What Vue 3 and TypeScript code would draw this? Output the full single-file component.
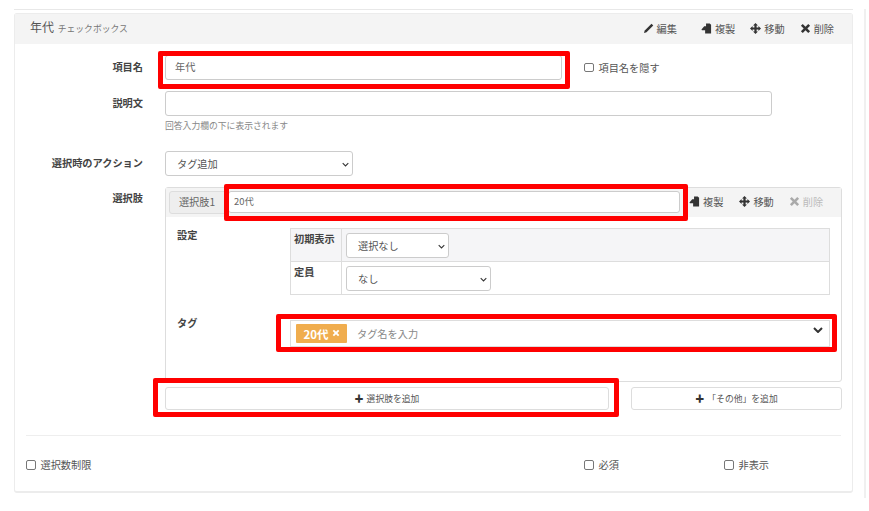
<script setup lang="ts">
const tableRows = [
  { label: '初期表示', value: '選択なし', width: 'narrow', shaded: true },
  { label: '定員', value: 'なし', width: 'wide', shaded: false },
]
const footChecks = ['必須', '非表示']
</script>

<template>
  <div class="page">
    <div class="sheet">
      <section class="card">
        <header class="card-head">
          <div class="title">年代 <small>チェックボックス</small></div>
          <div class="actions">
            <span class="act act-edit">
              <svg viewBox="0 0 12 12"><path d="M9.300.8l1.900 1.900-7.400 7.400-2.800.9.900-2.800z" /></svg>編集
            </span>
            <span class="act act-copy">
              <svg viewBox="0 0 12 12"><path d="M5.500 0.500h4l1.500 1.500v9.500H4.500V8H1L0.500 7l3-3.500h2zM3.500 5v2h-1.500z" /></svg>複製
            </span>
            <span class="act act-move">
              <svg viewBox="0 0 12 12"><path d="M6 0l2.700 2.800H7.200v2h2V3.300L12 6 9.200 8.700V7.200h-2v2h1.500L6 12 3.300 9.200h1.500v-2h-2v1.500L0 6l2.800-2.700v1.500h2v-2H3.300z" /></svg>移動
            </span>
            <span class="act">
              <svg viewBox="0 0 12 12"><path d="M3 1l3 3 3-3 2 2-3 3 3 3-2 2-3-3-3 3-2-2 3-3-3-3z" /></svg>削除
            </span>
          </div>
        </header>

        <div class="card-body">
          <div class="row row-name">
            <label class="label">項目名</label>
            <div class="mark mark-name"><input class="input name-input" value="年代" /></div>
            <label class="check check-hide"><i class="box"></i>項目名を隠す</label>
          </div>

          <div class="row row-desc">
            <label class="label">説明文</label>
            <div>
              <input class="input desc-input" />
              <p class="help">回答入力欄の下に表示されます</p>
            </div>
          </div>

          <div class="row row-action">
            <label class="label">選択時のアクション</label>
            <div class="select action-select">タグ追加<svg class="caret" viewBox="0 0 10 6"><path d="M1 1l4 4 4-4" /></svg></div>
          </div>

          <div class="row row-options">
            <label class="label">選択肢</label>
            <div class="options-col">
              <div class="panel">
                <div class="panel-head">
                  <span class="tab">選択肢1</span>
                  <div class="mark mark-option"><input class="input option-input" value="20代" /></div>
                  <div class="panel-actions">
                    <span class="act act-copy">
                      <svg viewBox="0 0 12 12"><path d="M5.500 0.500h4l1.500 1.500v9.500H4.500V8H1L0.500 7l3-3.500h2zM3.500 5v2h-1.500z" /></svg>複製
                    </span>
                    <span class="act act-move">
                      <svg viewBox="0 0 12 12"><path d="M6 0l2.700 2.800H7.200v2h2V3.300L12 6 9.200 8.700V7.200h-2v2h1.500L6 12 3.300 9.200h1.500v-2h-2v1.500L0 6l2.800-2.700v1.500h2v-2H3.300z" /></svg>移動
                    </span>
                    <span class="act disabled">
                      <svg viewBox="0 0 12 12"><path d="M3 1l3 3 3-3 2 2-3 3 3 3-2 2-3-3-3 3-2-2 3-3-3-3z" /></svg>削除
                    </span>
                  </div>
                </div>

                <div class="panel-row panel-settings">
                  <div class="sub-label">設定</div>
                  <div class="settings-table">
                    <div v-for="r in tableRows" :key="r.label" class="t-row" :class="{ shaded: r.shaded }">
                      <div class="t-head">{{ r.label }}</div>
                      <div class="t-cell">
                        <div class="select" :class="r.width">{{ r.value }}<svg class="caret" viewBox="0 0 10 6"><path d="M1 1l4 4 4-4" /></svg></div>
                      </div>
                    </div>
                  </div>
                </div>

                <div class="panel-row panel-tags">
                  <div class="sub-label">タグ</div>
                  <div class="mark mark-tags">
                    <div class="tag-input">
                      <span class="chip">20代<svg viewBox="0 0 12 12"><path d="M3 1l3 3 3-3 2 2-3 3 3 3-2 2-3-3-3 3-2-2 3-3-3-3z" /></svg></span>
                      <span class="placeholder">タグ名を入力</span>
                      <svg class="tag-caret" viewBox="0 0 10 6"><path d="M1 1l4 4 4-4" /></svg>
                    </div>
                  </div>
                </div>
              </div>

              <div class="add-row">
                <div class="mark mark-add">
                  <button class="add-btn"><span class="plus">✚</span>選択肢を追加</button>
                </div>
                <button class="add-btn other-btn"><span class="plus">✚</span>「その他」を追加</button>
              </div>
            </div>
          </div>

          <hr class="rule" />

          <div class="foot">
            <label class="check limit"><i class="box"></i>選択数制限</label>
            <label v-for="c in footChecks" :key="c" class="check foot-check"><i class="box"></i>{{ c }}</label>
          </div>
        </div>
      </section>
    </div>
    <div class="side-line"></div>
  </div>
</template>

<style>
html, body { margin: 0; background: #fff; }
</style>

<style scoped>
.page {
  width: 869px;
  height: 511px;
  overflow: hidden;
  display: flex;
  box-sizing: border-box;
  padding: 9px 3px 13px 14px;
  font-family: "Noto Sans CJK JP", "Liberation Sans", sans-serif;
  color: #555;
  font-size: 10.200px;
  background: #fff;
}
.sheet {
  width: 839px;
  flex: none;
  border-top: 1px solid #e8e8e8;
  padding-top: 3px;
  height: 484px;
  box-sizing: border-box;
}
.side-line {
  width: 2px;
  margin-left: 11px;
  height: 489px;
  background: #f0f0f0;
}
.card {
  border: 1px solid #ececec;
  border-bottom-width: 2px;
  border-radius: 3px;
  height: 480px;
  box-sizing: border-box;
}
.card-head {
  height: 30px;
  background: #f4f4f4;
  display: flex;
  align-items: center;
  justify-content: space-between;
  padding: 0 18px 0 15px;
}
.title { font-size: 12px; color: #555; line-height: 26px; margin-top: -2px; }
.title small { font-size: 8.800px; color: #777; margin-left: 1px; }
.actions { display: flex; margin-top: -1px; }
.act {
  display: inline-flex;
  align-items: center;
  font-size: 10.200px;
  color: #555;
  line-height: 14px;
}
.act svg { width: 11px; height: 11px; margin-right: 3px; fill: #333; }
.actions .act-edit { margin-right: 24px; }
.actions .act-copy { margin-right: 15px; }
.actions .act-move { margin-right: 15px; }
.card-body { padding: 0 11px; }
.row { display: flex; }
.label {
  width: 117px;
  margin-right: 22px;
  flex: none;
  text-align: right;
  font-weight: 700;
  font-size: 10.200px;
  line-height: 14px;
  color: #444;
}
.input {
  display: block;
  box-sizing: border-box;
  border: 1px solid #ccc;
  border-radius: 3px;
  background: #fff;
  font: inherit;
  color: #666;
  outline: none;
  padding: 0 9px 2px;
}
.mark { position: relative; }
.mark::after {
  content: "";
  position: absolute;
  border: 5px solid #ff0000;
  border-radius: 2px;
  pointer-events: none;
}
.row-name { padding-top: 11px; height: 25px; }
.row-name .label { padding-top: 5px; }
.name-input { width: 397px; height: 25px; }
.mark-name::after { inset: -4px -8px -9px -7px; }
.check { display: inline-flex; align-items: center; font-size: 10.200px; color: #555; line-height: 14px; }
.box {
  width: 7.500px;
  height: 7.500px;
  border: 1px solid #777;
  border-radius: 2px;
  margin-right: 5px;
  background: #fff;
  flex: none;
}
.check-hide { margin-left: 22px; height: 25px; }
.row-desc { margin-top: 11px; }
.row-desc .label { padding-top: 5px; }
.desc-input { width: 607px; height: 25px; }
.help { margin: 3px 0 0; font-size: 8.800px; line-height: 14px; color: #888; }
.row-action { margin-top: 18px; }
.row-action .label { padding-top: 5px; }
.select {
  box-sizing: border-box;
  position: relative;
  height: 25px;
  border: 1px solid #ccc;
  border-radius: 3px;
  font-size: 10.200px;
  line-height: 24px;
  color: #555;
  padding-left: 11px;
  background: #fff;
}
.caret {
  position: absolute;
  right: 3px;
  top: 10px;
  width: 7px;
  height: 5px;
  fill: none;
  stroke: #333;
  stroke-width: 1.500;
}
.action-select { width: 188px; }
.row-options { margin-top: 11px; }
.row-options .label { padding-top: 4px; }
.options-col { width: 677px; flex: none; }
.panel {
  box-sizing: border-box;
  height: 195px;
  border: 1px solid #ddd;
  border-radius: 3px;
}
.panel-head {
  box-sizing: border-box;
  height: 29px;
  background: #f4f4f4;
  display: flex;
  align-items: center;
  padding: 0 0 1px 3px;
}
.tab {
  box-sizing: border-box;
  width: 56px;
  height: 23px;
  line-height: 20px;
  text-align: center;
  border: 1px solid #ddd;
  border-radius: 3px 0 0 3px;
  background: #eee;
  color: #666;
  flex: none;
}
.option-input { width: 452px; height: 22px; font-size: 9.400px; padding: 0 5px 2px; }
.mark-option { margin-left: 3px; }
.mark-option::after { inset: -7px -8px -8px -4px; }
.panel-actions { display: flex; margin: -1px 0 0 9px; }
.panel-actions .act-copy { margin-right: 16px; }
.panel-actions .act-move { margin-right: 15px; }
.act.disabled { color: #bbb; }
.act.disabled svg { fill: #aaa; }
.panel-row { display: flex; }
.sub-label {
  width: 113px;
  flex: none;
  padding-left: 11px;
  font-weight: 700;
  line-height: 14px;
  color: #444;
}
.panel-settings { padding-top: 11px; }
.settings-table {
  width: 540px;
  box-sizing: border-box;
  border: 1px solid #ddd;
}
.t-row { display: flex; height: 32px; }
.t-row + .t-row { border-top: 1px solid #ddd; height: 33px; box-sizing: border-box; }
.t-row.shaded { background: #f5f5f7; }
.t-head {
  box-sizing: border-box;
  width: 51px;
  flex: none;
  padding: 3px 0 0 3px;
  font-weight: 700;
  font-size: 10.200px;
  line-height: 14px;
  color: #444;
  border-right: 1px solid #ddd;
}
.t-cell { padding: 4px 0 0 4px; }
.narrow { width: 103px; }
.wide { width: 145px; }
.panel-tags { padding-top: 25px; }
.panel-tags .sub-label { margin-top: -4px; }
.tag-input {
  box-sizing: border-box;
  position: relative;
  width: 540px;
  height: 27px;
  border: 1px solid #ddd;
  display: flex;
  align-items: center;
  padding-left: 5px;
}
.chip {
  display: flex;
  align-items: center;
  justify-content: center;
  width: 51px;
  height: 19px;
  background: #f0ad4e;
  color: #fff;
  font-weight: 700;
  font-size: 11.500px;
  border-radius: 1px;
  box-sizing: border-box;
  white-space: nowrap;
  flex: none;
}
.chip svg { width: 8px; height: 8px; margin: -2px 0 0 3px; fill: #fff; }
.placeholder { margin-left: 10px; color: #888; font-size: 10.200px; }
.tag-caret {
  position: absolute;
  right: 6px;
  top: 6px;
  width: 10px;
  height: 6px;
  fill: none;
  stroke: #333;
  stroke-width: 2;
}
.mark-tags::after { inset: -6px -7px -5px -14px; }
.add-row { display: flex; justify-content: space-between; margin-top: 5px; }
.add-btn {
  box-sizing: border-box;
  display: flex;
  align-items: center;
  justify-content: center;
  width: 444px;
  height: 23px;
  border: 1px solid #ddd;
  border-radius: 3px;
  background: #fff;
  font-family: inherit;
  font-size: 8.800px;
  color: #555;
  padding: 0;
}
.other-btn { width: 211px; }
.plus { font-size: 9px; color: #333; margin-right: 3px; }
.mark-add::after { inset: -9px -10px -7px -12px; }
.rule { border: 0; border-top: 1px solid #eee; margin: 25px 0 0; width: 815px; height: 0; }
.foot { display: flex; margin-top: 22px; }
.limit { width: 558px; flex: none; }
.foot-check { width: 140px; flex: none; }
</style>
